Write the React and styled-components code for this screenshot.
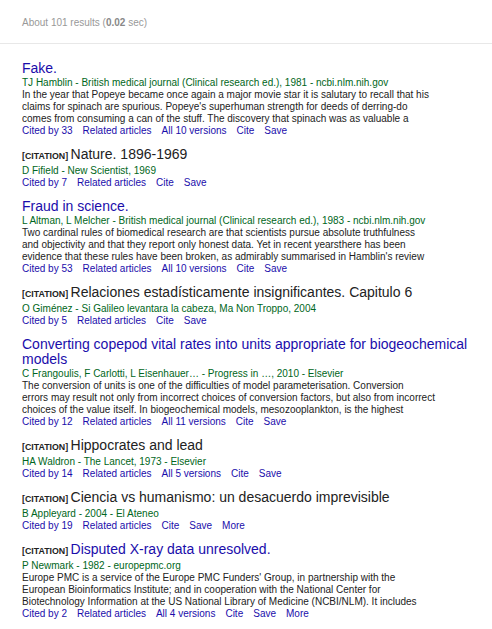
import React from 'react';
import styled, { createGlobalStyle } from 'styled-components';

const GlobalStyle = createGlobalStyle`
  html, body {
    margin: 0;
    padding: 0;
    background: #fff;
    overflow: hidden;
  }
  body {
    font-family: "Liberation Sans", Arial, sans-serif;
  }
`;

const Page = styled.div`
  width: 492px;
  height: 629px;
  overflow: hidden;
  background: #fff;
`;

const Header = styled.div`
  height: 44px;
  box-sizing: border-box;
  padding: 17px 0 0 22px;
  border-bottom: 1px solid #e8e8e8;
  font-size: 10px;
  line-height: 12px;
  color: #999;
  b {
    font-weight: bold;
    color: #888;
  }
`;

const Results = styled.div`
  padding: 17px 0 0 22px;
`;

const Item = styled.div`
  margin-bottom: 10px;
`;

const TitleLine = styled.div`
  font-size: 14px;
  line-height: 15px;
  white-space: nowrap;
`;

const Tag = styled.b`
  font-size: 8.8px;
  font-weight: bold;
  color: #222;
`;

const TitleText = styled.span`
  color: ${(p) => (p.$link ? '#1a0dab' : '#222')};
`;

const Meta = styled.div`
  font-size: 10px;
  line-height: 13px;
  color: #006621;
  white-space: nowrap;
`;

const SnippetLine = styled.div`
  font-size: 10px;
  line-height: 12px;
  color: #222;
  white-space: nowrap;
  &:first-child {
    margin-top: 1px;
  }
`;

const Links = styled.div`
  display: flex;
  gap: 10px;
  font-size: 10px;
  line-height: 12px;
  white-space: nowrap;
`;

const ActionLink = styled.a`
  color: #1a0dab;
  text-decoration: none;
`;

const results = [
  {
    title: ['Fake.'],
    link: true,
    meta: 'TJ Hamblin - British medical journal (Clinical research ed.), 1981 - ncbi.nlm.nih.gov',
    snippet: [
      'In the year that Popeye became once again a major movie star it is salutary to recall that his',
      "claims for spinach are spurious. Popeye's superhuman strength for deeds of derring-do",
      'comes from consuming a can of the stuff. The discovery that spinach was as valuable a',
    ],
    links: ['Cited by 33', 'Related articles', 'All 10 versions', 'Cite', 'Save'],
  },
  {
    citation: true,
    title: ['Nature. 1896-1969'],
    meta: 'D Fifield - New Scientist, 1969',
    links: ['Cited by 7', 'Related articles', 'Cite', 'Save'],
  },
  {
    title: ['Fraud in science.'],
    link: true,
    meta: 'L Altman, L Melcher - British medical journal (Clinical research ed.), 1983 - ncbi.nlm.nih.gov',
    snippet: [
      'Two cardinal rules of biomedical research are that scientists pursue absolute truthfulness',
      'and objectivity and that they report only honest data. Yet in recent yearsthere has been',
      "evidence that these rules have been broken, as admirably summarised in Hamblin's review",
    ],
    links: ['Cited by 53', 'Related articles', 'All 10 versions', 'Cite', 'Save'],
  },
  {
    citation: true,
    title: ['Relaciones estadísticamente insignificantes. Capitulo 6'],
    meta: 'O Giménez - Si Galileo levantara la cabeza, Ma Non Troppo, 2004',
    links: ['Cited by 5', 'Related articles', 'Cite', 'Save'],
  },
  {
    title: ['Converting copepod vital rates into units appropriate for biogeochemical', 'models'],
    link: true,
    meta: 'C Frangoulis, F Carlotti, L Eisenhauer\u2026 - Progress in \u2026, 2010 - Elsevier',
    snippet: [
      'The conversion of units is one of the difficulties of model parameterisation. Conversion',
      'errors may result not only from incorrect choices of conversion factors, but also from incorrect',
      'choices of the value itself. In biogeochemical models, mesozooplankton, is the highest',
    ],
    links: ['Cited by 12', 'Related articles', 'All 11 versions', 'Cite', 'Save'],
  },
  {
    citation: true,
    title: ['Hippocrates and lead'],
    meta: 'HA Waldron - The Lancet, 1973 - Elsevier',
    links: ['Cited by 14', 'Related articles', 'All 5 versions', 'Cite', 'Save'],
  },
  {
    citation: true,
    title: ['Ciencia vs humanismo: un desacuerdo imprevisible'],
    meta: 'B Appleyard - 2004 - El Ateneo',
    links: ['Cited by 19', 'Related articles', 'Cite', 'Save', 'More'],
  },
  {
    citation: true,
    link: true,
    title: ['Disputed X-ray data unresolved.'],
    meta: 'P Newmark - 1982 - europepmc.org',
    snippet: [
      "Europe PMC is a service of the Europe PMC Funders' Group, in partnership with the",
      'European Bioinformatics Institute; and in cooperation with the National Center for',
      'Biotechnology Information at the US National Library of Medicine (NCBI/NLM). It includes',
    ],
    links: ['Cited by 2', 'Related articles', 'All 4 versions', 'Cite', 'Save', 'More'],
  },
  {
    link: true,
    title: ['a man of steel: spinach, iron and the decimal point'],
    meta: '',
    links: [],
  },
];

const Result = ({ r }) => (
  <Item>
    {r.title.map((line, i) => (
      <TitleLine key={i}>
        {i === 0 && r.citation && <Tag>[CITATION] </Tag>}
        <TitleText $link={r.link}>{line}</TitleText>
      </TitleLine>
    ))}
    {r.meta && <Meta>{r.meta}</Meta>}
    {r.snippet &&
      r.snippet.map((line, i) => <SnippetLine key={i}>{line}</SnippetLine>)}
    {r.links.length > 0 && (
      <Links>
        {r.links.map((l) => (
          <ActionLink key={l} href="#">{l}</ActionLink>
        ))}
      </Links>
    )}
  </Item>
);

const App = () => (
  <Page>
    <GlobalStyle />
    <Header>
      About 101 results (<b>0.02</b> sec)
    </Header>
    <Results>
      {results.map((r, i) => (
        <Result key={i} r={r} />
      ))}
    </Results>
  </Page>
);

export default App;
